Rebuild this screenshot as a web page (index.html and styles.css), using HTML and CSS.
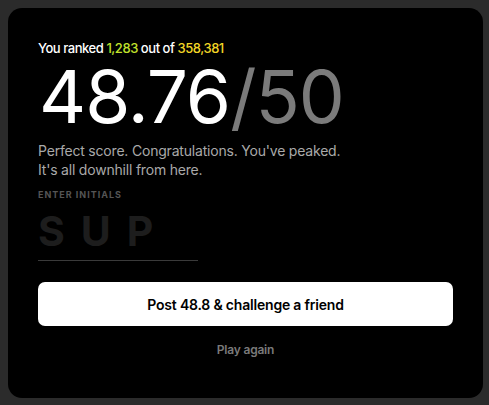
FILE: index.html
```html
<!DOCTYPE html>
<html>
<head>
<meta charset="utf-8">
<link rel="stylesheet" href="styles.css">
</head>
<body>
<div class="card">
  <p class="rank">You ranked <span class="green">1,283</span> out of <span class="yellow">358,381</span></p>
  <div class="score"><span class="main">48.76</span><span class="total">/50</span></div>
  <p class="msg">Perfect score. Congratulations. You've peaked.<br>It's all downhill from here.</p>
  <div class="label">ENTER INITIALS</div>
  <div class="initials">SUP</div>
  <button class="post">Post 48.8 &amp; challenge a friend</button>
  <div class="again">Play again</div>
</div>
</body>
</html>
```
FILE: styles.css
```css
html, body {
  margin: 0;
  padding: 0;
  background: #2b2b2b;
}
body {
  padding: 8px;
  font-family: Inter, "Liberation Sans", sans-serif;
}
.card {
  width: 475px;
  height: 390px;
  box-sizing: border-box;
  background: #000;
  border-radius: 14px;
  padding: 32px 30px 0 30px;
  display: flex;
  flex-direction: column;
}
.rank {
  margin: 0;
  font-size: 13px;
  line-height: 16px;
  color: #fff;
  font-weight: 500;
  letter-spacing: -0.45px;
}
.green { color: #c2e22c; }
.yellow { color: #f3d726; }
.score {
  font-size: 73px;
  line-height: 78px;
  letter-spacing: -1px;
  margin-top: 2px;
  margin-left: 1px;
  font-weight: 400;
}
.main { color: #fff; }
.total { color: #7b7b7b; }
.msg {
  margin: 5px 0 0 0;
  font-size: 14px;
  line-height: 19px;
  color: #a9a9a9;
  letter-spacing: -0.2px;
}
.label {
  margin-top: 10px;
  font-size: 9px;
  font-weight: 700;
  letter-spacing: 1px;
  color: #555;
  line-height: 12px;
}
.initials {
  margin-top: 8px;
  width: 160px;
  font-size: 41px;
  font-weight: 700;
  letter-spacing: 16px;
  color: #1d1d1d;
  line-height: 44px;
  padding-bottom: 7px;
  border-bottom: 1px solid #3a3a3a;
}
.post {
  margin-top: 21px;
  height: 44px;
  border: none;
  border-radius: 7px;
  background: #fff;
  color: #000;
  font-family: inherit;
  font-size: 14px;
  font-weight: 600;
  letter-spacing: -0.2px;
}
.again {
  margin-top: 16px;
  text-align: center;
  font-size: 12px;
  font-weight: 600;
  color: #7a7a7a;
  letter-spacing: -0.2px;
}
```
